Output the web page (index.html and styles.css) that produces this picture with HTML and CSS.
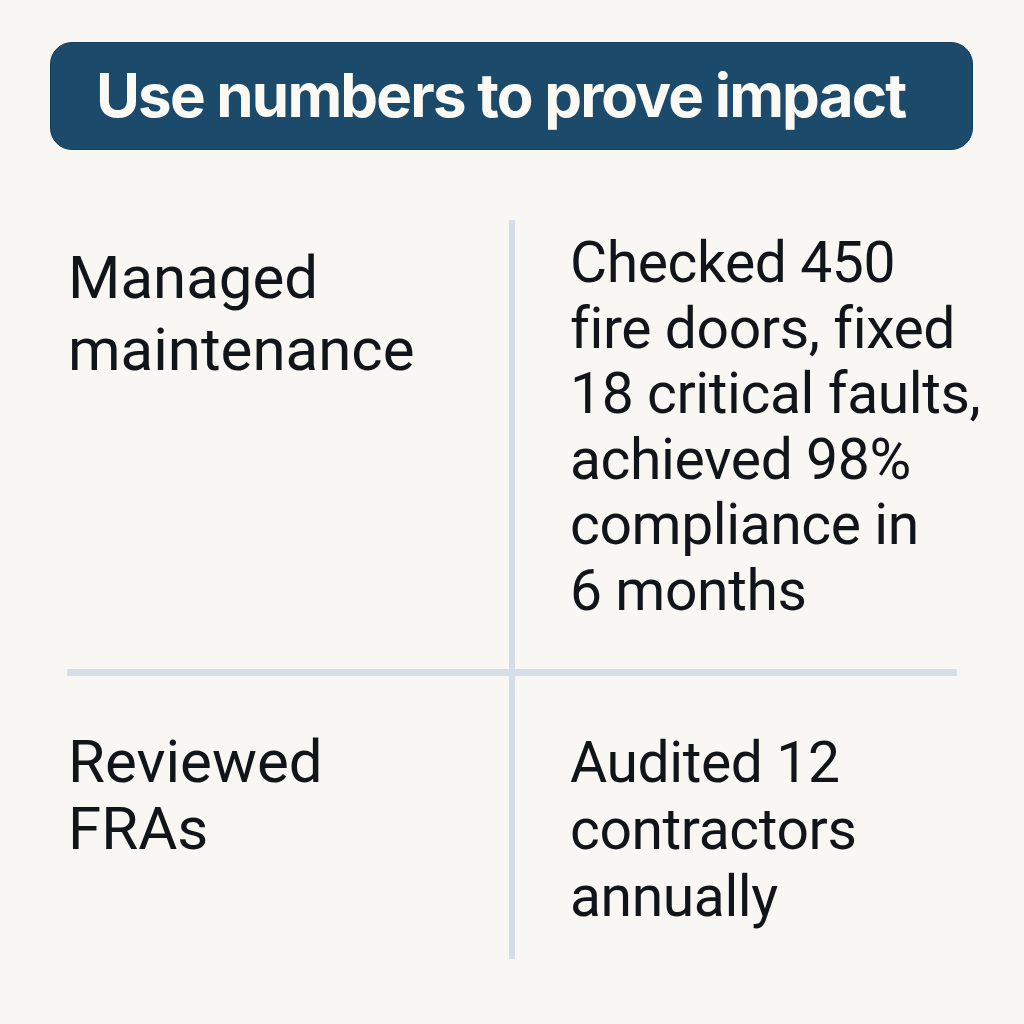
FILE: index.html
```html
<!DOCTYPE html>
<html lang="en">
<head>
<meta charset="utf-8">
<title>Use numbers to prove impact</title>
<link rel="stylesheet" href="styles.css">
</head>
<body>
<main class="page">
  <header class="banner">
    <h1 class="banner-title">Use numbers to prove impact</h1>
  </header>
  <section class="table">
    <div class="cell cell-left row-1">Managed<br>maintenance</div>
    <div class="vline"></div>
    <div class="cell cell-right row-1">Checked 450<br>fire doors, fixed<br>18 critical faults,<br>achieved 98%<br>compliance in<br>6 months</div>
    <div class="hline"></div>
    <div class="cell cell-left row-2">Reviewed<br>FRAs</div>
    <div class="cell cell-right row-2">Audited 12<br>contractors<br>annually</div>
  </section>
</main>
</body>
</html>
```
FILE: styles.css
```css
html, body {
  margin: 0;
  padding: 0;
  background: #f9f7f3;
}
.page {
  width: 1024px;
  height: 1024px;
  box-sizing: border-box;
  padding: 42px 51px 0 50px;
  font-family: Roboto, "Noto Sans", sans-serif;
  color: #111418;
}
.banner {
  height: 108px;
  box-sizing: border-box;
  border-radius: 22px;
  background: #1b4a6b;
  border: 1px solid #153c58;
  display: flex;
  align-items: center;
  padding-left: 45px;
}
.banner-title {
  margin: 0 0 2px;
  font-family: Inter, "Noto Sans", sans-serif;
  font-size: 60px;
  font-weight: 700;
  color: #fbf9f4;
  letter-spacing: -1.8px;
  line-height: 1;
}
.table {
  margin: 70px 0 0 17px;
  width: 890px;
  display: grid;
  grid-template-columns: 442px 6px minmax(0, 1fr);
  grid-template-rows: 449px 7px 283px;
}
.vline {
  grid-column: 2;
  grid-row: 1 / 4;
  background: #d4dee6;
}
.hline {
  grid-column: 1 / 4;
  grid-row: 2;
  background: #d4dee6;
}
.cell {
  font-weight: 400;
  white-space: nowrap;
}
.cell-left {
  grid-column: 1;
  padding-left: 1px;
  font-size: 60px;
}
.cell-right {
  grid-column: 3;
  padding-left: 55px;
  font-size: 57px;
  letter-spacing: -0.4px;
}
.cell-left.row-1 { grid-row: 1; padding-top: 22px; line-height: 72px; }
.cell-right.row-1 { grid-row: 1; padding-top: 10px; line-height: 65.5px; }
.cell-left.row-2 { grid-row: 3; padding-top: 52px; line-height: 67px; }
.cell-right.row-2 { grid-row: 3; padding-top: 53px; line-height: 67px; }
```
